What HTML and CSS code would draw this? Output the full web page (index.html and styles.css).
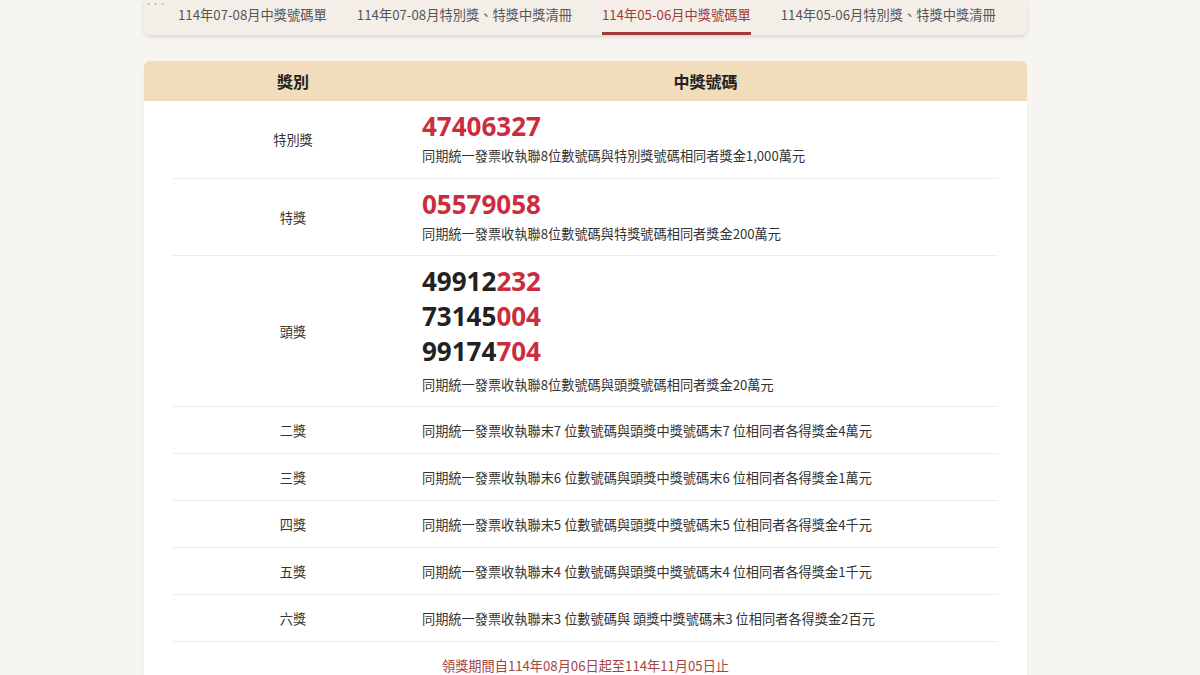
FILE: index.html
```html
<!DOCTYPE html>
<html lang="zh-Hant">
<head>
<meta charset="utf-8">
<title>統一發票中獎號碼</title>
<link rel="stylesheet" href="styles.css">
</head>
<body>
<div class="page">
  <nav class="tabs">
    <span class="dots">···</span>
    <a class="tab">114年07-08月中獎號碼單</a>
    <a class="tab">114年07-08月特別獎、特獎中獎清冊</a>
    <a class="tab active">114年05-06月中獎號碼單</a>
    <a class="tab">114年05-06月特別獎、特獎中獎清冊</a>
  </nav>

  <section class="card">
    <div class="head">
      <div class="hcell">獎別</div>
      <div class="hcell">中獎號碼</div>
    </div>
    <div class="body">
      <div class="row big first">
        <div class="label">特別獎</div>
        <div class="content">
          <div class="num red">47406327</div>
          <div class="desc">同期統一發票收執聯8位數號碼與特別獎號碼相同者獎金1,000萬元</div>
        </div>
      </div>
      <div class="row big">
        <div class="label">特獎</div>
        <div class="content">
          <div class="num red">05579058</div>
          <div class="desc">同期統一發票收執聯8位數號碼與特獎號碼相同者獎金200萬元</div>
        </div>
      </div>
      <div class="row big">
        <div class="label">頭獎</div>
        <div class="content">
          <div class="num">49912<span class="red">232</span></div>
          <div class="num">73145<span class="red">004</span></div>
          <div class="num">99174<span class="red">704</span></div>
          <div class="desc multi">同期統一發票收執聯8位數號碼與頭獎號碼相同者獎金20萬元</div>
        </div>
      </div>
      <div class="row">
        <div class="label">二獎</div>
        <div class="content">同期統一發票收執聯末7 位數號碼與頭獎中獎號碼末7 位相同者各得獎金4萬元</div>
      </div>
      <div class="row">
        <div class="label">三獎</div>
        <div class="content">同期統一發票收執聯末6 位數號碼與頭獎中獎號碼末6 位相同者各得獎金1萬元</div>
      </div>
      <div class="row">
        <div class="label">四獎</div>
        <div class="content">同期統一發票收執聯末5 位數號碼與頭獎中獎號碼末5 位相同者各得獎金4千元</div>
      </div>
      <div class="row">
        <div class="label">五獎</div>
        <div class="content">同期統一發票收執聯末4 位數號碼與頭獎中獎號碼末4 位相同者各得獎金1千元</div>
      </div>
      <div class="row">
        <div class="label">六獎</div>
        <div class="content">同期統一發票收執聯末3 位數號碼與 頭獎中獎號碼末3 位相同者各得獎金2百元</div>
      </div>
      <p class="note">領獎期間自114年08月06日起至114年11月05日止</p>
    </div>
  </section>
</div>
</body>
</html>
```

FILE: styles.css
```css
* { box-sizing: border-box; }
html, body {
  margin: 0;
  padding: 0;
  background: #f7f5f1;
  font-family: "Noto Sans CJK TC", "Noto Sans", sans-serif;
  color: #333;
  overflow: hidden;
}
.page {
  width: 883px;
  margin-left: 144px;
}
.tabs {
  position: relative;
  display: flex;
  gap: 30px;
  height: 35px;
  padding-left: 34px;
  background: #f3eee8;
  border-radius: 0 0 6px 6px;
  box-shadow: 0 2px 4px rgba(0, 0, 0, 0.12);
}
.dots {
  position: absolute;
  left: 1px;
  top: 0;
  font-size: 7px;
  line-height: 6px;
  color: #999;
}
.tab {
  display: block;
  font-size: 13.25px;
  line-height: 30px;
  color: #555;
  white-space: nowrap;
  border-bottom: 3px solid transparent;
  height: 35px;
}
.tab.active {
  color: #a33a3a;
  border-bottom-color: #a33a3a;
}
.card {
  margin-top: 26px;
  background: #fff;
  border-radius: 6px 6px 0 0;
  box-shadow: 0 1px 3px rgba(0, 0, 0, 0.05);
}
.head {
  display: grid;
  grid-template-columns: 240px 1fr;
  height: 40px;
  padding: 0 29px;
  background: #f1dcbc;
  border-radius: 6px 6px 0 0;
}
.hcell {
  display: flex;
  align-items: center;
  justify-content: center;
  font-size: 16px;
  font-weight: 700;
  color: #222;
}
.body {
  padding: 0 29px;
}
.row {
  display: grid;
  grid-template-columns: 240px 1fr;
  border-bottom: 1px solid #ececec;
  min-height: 47px;
}
.label {
  display: flex;
  align-items: center;
  justify-content: center;
  font-size: 13.2px;
  color: #333;
}
.content {
  padding: 14px 0 12px 9px;
  font-size: 13.2px;
  line-height: 20px;
  color: #333;
}
.row.big .content {
  padding: 8px 0 11px 9px;
}
.row.big.first .content {
  padding-bottom: 12px;
}
.num {
  font-family: "Noto Sans", "Noto Sans CJK TC", sans-serif;
  font-size: 26px;
  font-weight: 700;
  line-height: 35px;
  color: #222;
}
.red {
  color: #c92d3f;
}
.desc {
  margin-top: 2px;
}
.desc.multi {
  margin-top: 6px;
}
.note {
  margin: 0;
  padding: 14px 0 20px;
  text-align: center;
  font-size: 13.2px;
  line-height: 20px;
  color: #a4453e;
}
```
